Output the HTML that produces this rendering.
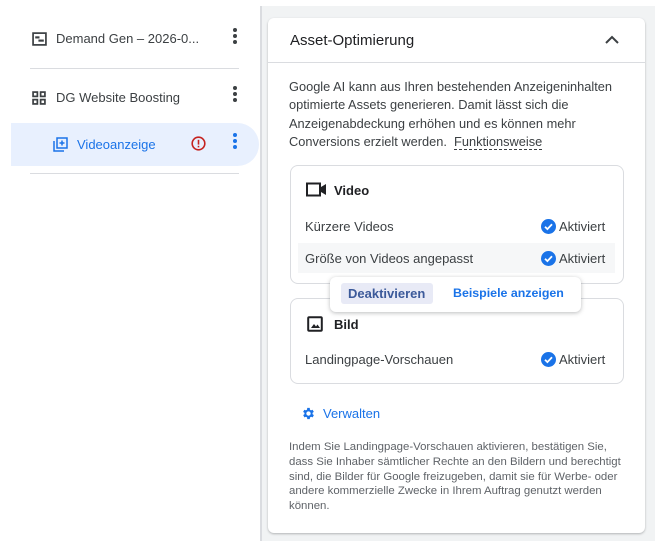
<!DOCTYPE html>
<html><head><meta charset="utf-8"><style>
*{margin:0;padding:0;box-sizing:border-box}
body{width:666px;height:551px;background:#fff;font-family:"Liberation Sans",Arial,sans-serif;position:relative;overflow:hidden;color:#3c4043}
.a{position:absolute;white-space:nowrap}
.dots{position:absolute;width:4px}
.dots i{display:block;width:4px;height:4px;border-radius:50%;background:#3c4043;margin-bottom:2px}
.hr{position:absolute;height:1px;background:#dadce0}
.box{position:absolute;border:1px solid #dadce0;border-radius:8px;background:#fff}
.chk{position:absolute;font-size:13px;color:#3c4043}
.chk svg{vertical-align:-3px;margin-right:3px}
</style></head><body>
<svg class="a" style="left:32px;top:32px" width="15" height="14" viewBox="0 0 14 13"><rect x="1" y="1" width="12" height="11" fill="none" stroke="#3c4043" stroke-width="1.6"/><rect x="3" y="4" width="4" height="2" fill="#3c4043"/><rect x="6" y="7" width="5" height="2" fill="#3c4043"/></svg>
<div class="a" style="left:56px;top:31px;font-size:13px;color:#3c4043">Demand Gen – 2026-0...</div>
<div class="dots" style="left:233px;top:28px"><i></i><i></i><i></i></div>
<div class="hr" style="left:30px;top:68px;width:209px"></div>
<svg class="a" style="left:32px;top:91px" width="14" height="14" viewBox="0 0 13 13" fill="none" stroke="#3c4043" stroke-width="1.6"><rect x="1" y="1" width="4" height="4"/><rect x="8" y="1" width="4" height="4"/><rect x="1" y="8" width="4" height="4"/><rect x="8" y="8" width="4" height="4"/></svg>
<div class="a" style="left:56px;top:90px;font-size:13px;color:#3c4043">DG Website Boosting</div>
<div class="dots" style="left:233px;top:86px"><i></i><i></i><i></i></div>
<div class="a" style="left:11px;top:123px;width:248px;height:43px;background:#e8f0fe;border-radius:0 22px 22px 0"></div>
<svg class="a" style="left:53px;top:137px" width="15" height="15" viewBox="0 0 15 15" fill="none" stroke="#1a73e8" stroke-width="1.5"><path d="M1 4v10h10"/><rect x="4" y="1" width="10" height="10"/><path d="M9 3.5v5M6.5 6h5"/></svg>
<div class="a" style="left:77px;top:137px;font-size:13px;color:#1a73e8">Videoanzeige</div>
<svg class="a" style="left:191px;top:136px" width="15" height="15" viewBox="0 0 15 15"><circle cx="7.5" cy="7.5" r="6.3" fill="none" stroke="#c5221f" stroke-width="1.6"/><rect x="6.7" y="3.8" width="1.6" height="4.8" fill="#c5221f"/><rect x="6.7" y="9.8" width="1.6" height="1.6" fill="#c5221f"/></svg>
<div class="dots" style="left:233px;top:133px"><i style="background:#1a73e8"></i><i style="background:#1a73e8"></i><i style="background:#1a73e8"></i></div>
<div class="hr" style="left:30px;top:173px;width:209px"></div>
<div class="a" style="left:260px;top:6px;width:395px;height:535px;background:#f1f3f4;border-left:2px solid #dadce0"></div>
<div class="a" style="left:268px;top:18px;width:377px;height:515px;background:#fff;border-radius:6px;box-shadow:0 1px 2px rgba(60,64,67,.35)"></div>
<div class="a" style="left:290px;top:32px;font-size:15px;color:#202124">Asset-Optimierung</div>
<svg class="a" style="left:604px;top:34px" width="16" height="12" viewBox="0 0 16 12"><path d="M2 9l6-6 6 6" fill="none" stroke="#3c4043" stroke-width="2"/></svg>
<div class="hr" style="left:268px;top:62px;width:377px"></div>
<div class="a" style="left:289px;top:78px;font-size:12.8px;line-height:18.3px;color:#3c4043">Google AI kann aus Ihren bestehenden Anzeigeninhalten<br>optimierte Assets generieren. Damit lässt sich die<br>Anzeigenabdeckung erhöhen und es können mehr<br>Conversions erzielt werden.&nbsp; <span style="border-bottom:1px dashed #3c4043">Funktionsweise</span></div>
<div class="box" style="left:290px;top:165px;width:334px;height:119px"></div>
<svg class="a" style="left:306px;top:182px" width="21" height="15" viewBox="0 0 21 15"><rect x="1" y="1.5" width="13" height="12" fill="none" stroke="#202124" stroke-width="2"/><path d="M15 5l5-3v11l-5-3z" fill="#202124"/></svg>
<div class="a" style="left:334px;top:183px;font-size:13px;font-weight:bold;color:#202124">Video</div>
<div class="a" style="left:305px;top:219px;font-size:13px">Kürzere Videos</div>
<div class="a" style="left:298px;top:243px;width:317px;height:30px;background:#f6f7f8"></div>
<div class="a" style="left:305px;top:251px;font-size:13px">Größe von Videos angepasst</div>
<div class="chk" style="left:541px;top:219px"><svg width="15" height="15" viewBox="0 0 15 15"><circle cx="7.5" cy="7.5" r="7.5" fill="#1a73e8"/><path d="M4 7.7l2.4 2.4 4.6-4.8" fill="none" stroke="#fff" stroke-width="1.8"/></svg>Aktiviert</div>
<div class="chk" style="left:541px;top:251px"><svg width="15" height="15" viewBox="0 0 15 15"><circle cx="7.5" cy="7.5" r="7.5" fill="#1a73e8"/><path d="M4 7.7l2.4 2.4 4.6-4.8" fill="none" stroke="#fff" stroke-width="1.8"/></svg>Aktiviert</div>
<div class="box" style="left:290px;top:298px;width:334px;height:86px"></div>
<div class="a" style="left:330px;top:277px;width:251px;height:35px;background:#fff;border-radius:6px;box-shadow:0 1px 4px rgba(60,64,67,.35)"></div>
<div class="a" style="left:341px;top:283px;width:92px;height:21px;background:#e8eaf6;border-radius:3px"></div>
<div class="a" style="left:348px;top:286px;font-size:13px;font-weight:bold;color:#3c5a9a">Deaktivieren</div>
<div class="a" style="left:453px;top:286px;font-size:12.4px;font-weight:bold;color:#1a73e8">Beispiele anzeigen</div>
<svg class="a" style="left:307px;top:316px" width="16" height="16" viewBox="0 0 16 16"><rect x="1.2" y="1.2" width="13.6" height="13.6" rx="1" fill="none" stroke="#202124" stroke-width="2"/><path d="M4 12l3-4 2 2.5 1.5-2 2.5 3.5z" fill="#202124"/></svg>
<div class="a" style="left:334px;top:317px;font-size:13px;font-weight:bold;color:#202124">Bild</div>
<div class="a" style="left:305px;top:352px;font-size:13px">Landingpage-Vorschauen</div>
<div class="chk" style="left:541px;top:352px"><svg width="15" height="15" viewBox="0 0 15 15"><circle cx="7.5" cy="7.5" r="7.5" fill="#1a73e8"/><path d="M4 7.7l2.4 2.4 4.6-4.8" fill="none" stroke="#fff" stroke-width="1.8"/></svg>Aktiviert</div>
<svg class="a" style="left:301px;top:406px" width="15" height="15" viewBox="0 0 24 24"><path fill="#1a73e8" d="M19.4 13a7.5 7.5 0 000-2l2.1-1.6-2-3.5-2.5 1a7 7 0 00-1.7-1L15 3h-4l-.4 2.9a7 7 0 00-1.7 1l-2.5-1-2 3.5L6.6 11a7.5 7.5 0 000 2l-2.1 1.6 2 3.5 2.5-1a7 7 0 001.7 1L11 21h4l.4-2.9a7 7 0 001.7-1l2.5 1 2-3.5zM13 15.5a3.5 3.5 0 110-7 3.5 3.5 0 010 7z" transform="translate(-1 0)"/></svg>
<div class="a" style="left:323px;top:406px;font-size:13px;color:#1a73e8">Verwalten</div>
<div class="a" style="left:289px;top:440px;font-size:11.4px;line-height:14.8px;color:#5f6368">Indem Sie Landingpage-Vorschauen aktivieren, bestätigen Sie,<br>dass Sie Inhaber sämtlicher Rechte an den Bildern und berechtigt<br>sind, die Bilder für Google freizugeben, damit sie für Werbe- oder<br>andere kommerzielle Zwecke in Ihrem Auftrag genutzt werden<br>können.</div>
</body></html>
